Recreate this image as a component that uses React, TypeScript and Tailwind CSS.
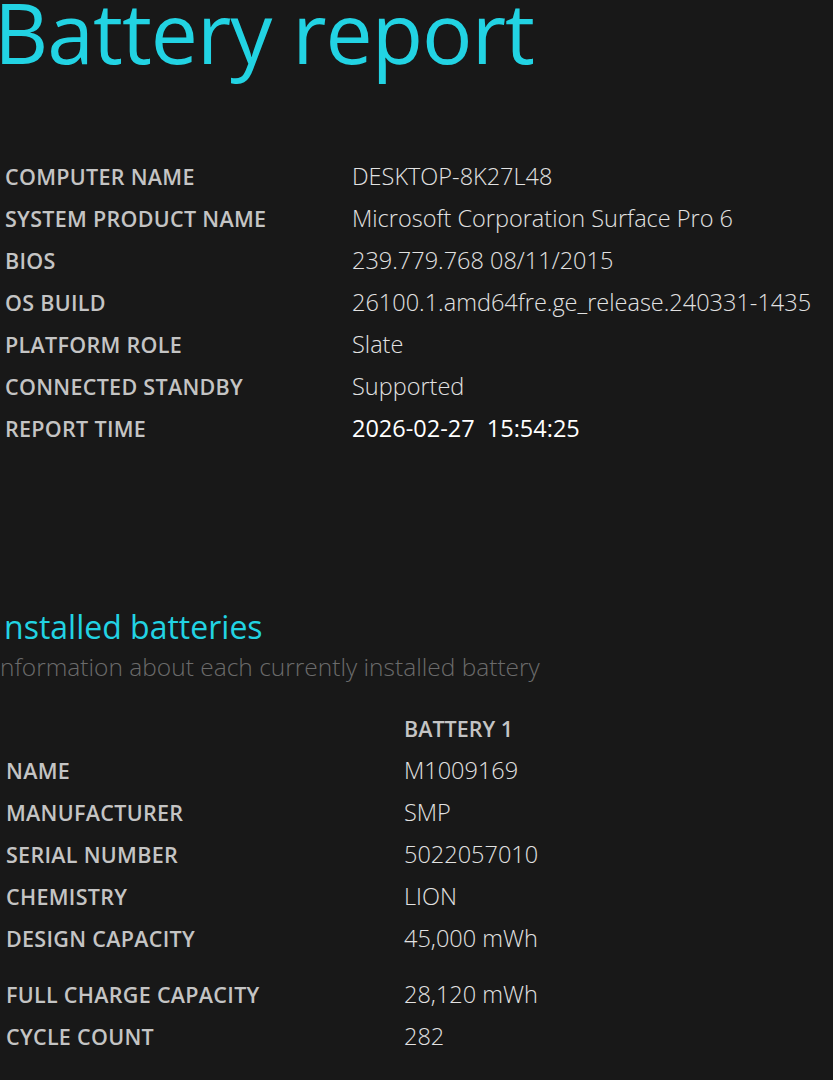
const sys: [string, string][] = [
  ["COMPUTER NAME", "DESKTOP-8K27L48"],
  ["SYSTEM PRODUCT NAME", "Microsoft Corporation Surface Pro 6"],
  ["BIOS", "239.779.768 08/11/2015"],
  ["OS BUILD", "26100.1.amd64fre.ge_release.240331-1435"],
  ["PLATFORM ROLE", "Slate"],
  ["CONNECTED STANDBY", "Supported"],
];

const bat: [string, string][] = [
  ["NAME", "M1009169"],
  ["MANUFACTURER", "SMP"],
  ["SERIAL NUMBER", "5022057010"],
  ["CHEMISTRY", "LION"],
  ["DESIGN CAPACITY", "45,000 mWh"],
];

const Row = ({ k, v, col, strong }: { k: string; v: string; col: string; strong?: boolean }) => (
  <div className="flex h-[42px] items-center">
    <div className={`${col} shrink-0 text-[21.5px] font-semibold text-[#c4c4c4] tracking-[0.3px]`}>{k}</div>
    <div className={`text-[23.5px] whitespace-pre ${strong ? "text-white font-normal" : "text-[#e2e2e2] font-light"}`}>{v}</div>
  </div>
);

export default function App() {
  return (
    <div className="w-[833px] h-[1080px] overflow-hidden bg-[#181818]" style={{ fontFamily: '"Open Sans", "Noto Sans", sans-serif' }}>
      <h1 className="text-[#22d3e3] text-[84px] font-normal leading-none -mt-[10px] -ml-[6px] tracking-[-1px] whitespace-nowrap">Battery report</h1>
      <div className="pl-[5px] mt-[82px]">
        {sys.map(([k, v]) => <Row key={k} k={k} v={v} col="w-[347px]" />)}
        <Row k="REPORT TIME" v="2026-02-27  15:54:25" col="w-[347px]" strong />
      </div>
      <div className="mt-[156px] pl-[4px] text-[#22d3e3] text-[32px] leading-[42px]">nstalled batteries</div>
      <div className="text-[#6b6b6b] text-[24.5px] font-light leading-[38px]">nformation about each currently installed battery</div>
      <div className="pl-[6px] mt-[22px]">
        <div className="flex h-[42px] items-center">
          <div className="w-[398px]" />
          <div className="text-[21.5px] font-semibold text-[#c4c4c4]">BATTERY 1</div>
        </div>
        {bat.map(([k, v]) => <Row key={k} k={k} v={v} col="w-[398px]" />)}
        <div className="h-[14px]" />
        <Row k="FULL CHARGE CAPACITY" v="28,120 mWh" col="w-[398px]" />
        <Row k="CYCLE COUNT" v="282" col="w-[398px]" />
      </div>
    </div>
  );
}
